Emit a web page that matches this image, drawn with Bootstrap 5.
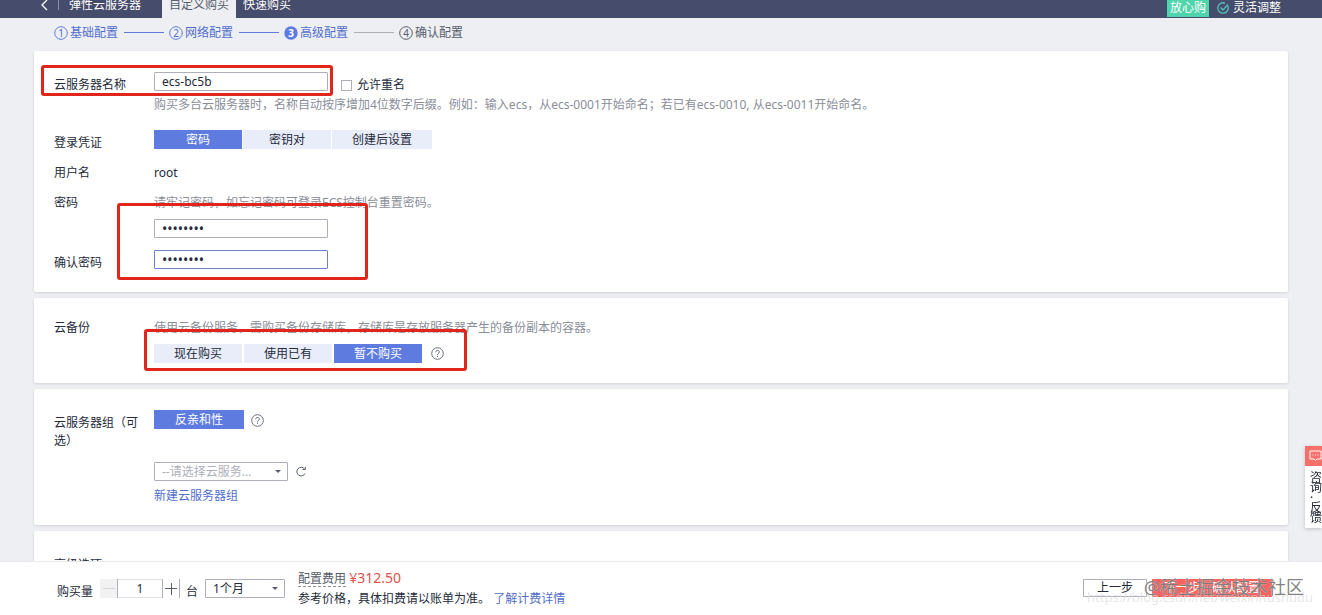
<!DOCTYPE html>
<html lang="zh-CN">
<head>
<meta charset="utf-8">
<meta name="viewport" content="width=device-width, initial-scale=1">
<title>弹性云服务器</title>
<link href="https://cdn.jsdelivr.net/npm/bootstrap@5.3.0/dist/css/bootstrap.min.css" rel="stylesheet">
<style>
body{font:12px/18px "Noto Sans","Noto Sans CJK SC",sans-serif;color:#252b3a;background:#edeff3;overflow:hidden;height:100vh}
a{color:#526ecc;text-decoration:none}
button,input,select{font:inherit;color:inherit}
.topbar{height:18px;background:#464c6b;color:#fff;overflow:hidden;padding-left:39px;padding-right:41px}
.topbar .item{line-height:26px;height:26px;color:#fff}
.topbar .extra{height:20px}
.topbar .current{background:#edeff3;color:#575d6c;padding:0 7px;margin-left:21px;margin-right:7px}
.topbar .rule{width:1px;height:10px;background:#8a8fa8;margin:0 10px 0 9px;align-self:flex-start}
.promo{background:#50d4ab;line-height:18px;height:18px;padding:0 3px}
.steps{height:33px;padding:0 0 4px 54px;color:#526ecc}
.steps .bar{width:40px;height:1px;background:#5e7ce0;margin:0 5px 0 6px}
.steps .todo{color:#575d6c}
.steps .bar.off{background:#adb0b8}
.steps svg{margin-right:2px}
.panel{position:relative;background:#fff;border-radius:2px;box-shadow:0 1px 3px rgba(0,0,0,.12);margin:0 34px 6px;padding:21px 20px 20px}
.line{display:flex;margin-bottom:12px}
.line:last-of-type{margin-bottom:0}
.line.wide{margin-bottom:16px}
.cap{flex:0 0 100px;padding-right:15px}
.low{padding-top:4px}
.hint{color:#8a8e99}
.hint.below{padding-top:2px}
.hint.above{margin-bottom:7px}
.box{display:block;height:19px;border:1px solid #adb0b8;border-radius:1px;background:#fff;padding:0 7px;line-height:17px;outline:0}
.field{width:174px}
.secret{font-size:14px}
.active-field{border-color:#6b82c8}
.dup{margin-left:13px}
.tick{appearance:none;width:11px;height:11px;border:1px solid #adb0b8;background:#fff;margin:0 5px 0 0}
.seg{height:19px;min-width:88px;border:0;background:#e9edfa;padding:0 20px;line-height:19px}
.seg.on{background:#5e7ce0;color:#fff}
.seg.solo{min-width:90px}
.seg-tight{gap:1px}
.seg-loose{gap:2px;padding-top:7px}
.ask{margin-left:7px}
.solo + .ask{margin-top:4px}
.group-row{margin-bottom:6px}
.pick{appearance:none;background:#fff url("data:image/svg+xml,%3Csvg xmlns='http://www.w3.org/2000/svg' viewBox='0 0 6 3'%3E%3Cpath d='M0 0h6L3 3z' fill='%23575d6c'/%3E%3C/svg%3E") no-repeat right 6px center/6px 3px;text-overflow:ellipsis;padding-right:28px}
.group-pick{width:134px;color:#adb0b8}
.month-pick{width:80px}
.mark-box{position:absolute;border:3px solid #e1251b;border-radius:3px;pointer-events:none}
.m-name{left:7px;top:14px;width:292px;height:31px}
.m-pass{left:83px;top:152px;width:251px;height:77px}
.m-backup{left:110px;top:31px;width:323px;height:42px}
.side{position:fixed;right:0;top:446px;width:17px;height:82px;background:#fff;overflow:hidden;box-shadow:0 1px 4px rgba(0,0,0,.2);color:#252b3a}
.side .top{display:block;height:20px;background:#f66f6a;padding-left:4px}
.side .say{display:block;width:12px;margin-left:5px;padding-top:7px;line-height:10px}
.buybar{position:fixed;left:0;right:0;bottom:0;height:54px;background:#fff;border-top:1px solid #e8e9ed;padding:6px 50px 0 57px}
.buybar .ctl{padding-top:11px}
.qty{margin-right:7px}
.unit{margin:0 7px 0 6px}
.stepper button{border:1px solid #adb0b8;border-width:0 1px;background:#fff;width:18px;height:19px;padding:0;line-height:0}
.stepper button:first-child{background:#f2f2f3;border-left:0}
.stepper input{width:44px;height:19px;border:1px solid #dfe1e6;border-width:1px 0;text-align:center;outline:0}
.cost{line-height:20px;margin-left:13px}
.price{font-size:14px;color:#e0504d}
.dash{border-bottom:1px dashed #8a8e99;color:#575d6c;line-height:14px;display:inline-block}
.prev{width:64px;border:1px solid #adb0b8;background:#fff;height:18px;line-height:16px;padding:0}
.next{width:120px;border:0;background:#f6625f;color:#fff;height:18px;line-height:18px;padding:0;margin-left:5px}
.wm{position:absolute;white-space:nowrap;pointer-events:none}
.wm-site{right:18px;top:13px;font-size:18px;line-height:24px;color:rgba(80,80,80,.72);text-shadow:0 0 1px #fff}
.wm-url{right:9px;top:25px;font-size:13px;line-height:20px;color:rgba(215,215,220,.65)}
</style>
</head>
<body>
<header class="topbar d-flex align-items-end">
  <a href="#" class="item d-flex align-items-center" aria-label="返回"><svg width="10" height="12" viewBox="0 0 10 12" fill="none" stroke="#fff" stroke-width="1.3"><path d="M8 1 3 6l5 5"/></svg></a>
  <span class="rule"></span>
  <span class="item">弹性云服务器</span>
  <a href="#" class="item current">自定义购买</a>
  <a href="#" class="item">快速购买</a>
  <div class="extra ms-auto d-flex align-items-center gap-2">
    <span class="promo">放心购</span>
    <span class="d-flex align-items-center"><svg class="me-1" width="12" height="12" viewBox="0 0 12 12" fill="none" stroke="#50c4bb" stroke-width="1.3"><path d="M10.8 4A5.2 5.2 0 1 1 8 1.2M3.5 5.5 6 8l5-5.5"/></svg>灵活调整</span>
  </div>
</header>

<nav class="steps d-flex align-items-center">
  <svg width="14" height="14" viewBox="0 0 14 14"><circle cx="7" cy="7" r="6.3" fill="none" stroke="#5e7ce0"/><text x="7" y="10.5" font-size="10" text-anchor="middle" fill="#526ecc">1</text></svg><span>基础配置</span><span class="bar"></span>
  <svg width="14" height="14" viewBox="0 0 14 14"><circle cx="7" cy="7" r="6.3" fill="none" stroke="#5e7ce0"/><text x="7" y="10.5" font-size="10" text-anchor="middle" fill="#526ecc">2</text></svg><span>网络配置</span><span class="bar"></span>
  <svg width="14" height="14" viewBox="0 0 14 14"><circle cx="7" cy="7" r="6.7" fill="#5e7ce0"/><text x="7" y="10.5" font-size="10" font-weight="700" text-anchor="middle" fill="#fff">3</text></svg><span>高级配置</span><span class="bar off"></span>
  <svg width="14" height="14" viewBox="0 0 14 14"><circle cx="7" cy="7" r="6.3" fill="none" stroke="#575d6c"/><text x="7" y="10.5" font-size="10" text-anchor="middle" fill="#575d6c">4</text></svg><span class="todo">确认配置</span>
</nav>

<main>
  <section class="panel">
    <div class="line wide">
      <label class="cap low" for="ecsName">云服务器名称</label>
      <div>
        <div class="d-flex">
          <input id="ecsName" class="box field" type="text" value="ecs-bc5b">
          <div class="dup low d-flex align-items-center">
            <input id="dup" class="tick" type="checkbox"><label for="dup">允许重名</label>
          </div>
        </div>
        <div class="hint below">购买多台云服务器时，名称自动按序增加4位数字后缀。例如：输入ecs，从ecs-0001开始命名；若已有ecs-0010, 从ecs-0011开始命名。</div>
      </div>
    </div>
    <div class="line">
      <span class="cap low">登录凭证</span>
      <div class="d-flex seg-tight">
        <button type="button" class="seg on">密码</button><button type="button" class="seg">密钥对</button><button type="button" class="seg">创建后设置</button>
      </div>
    </div>
    <div class="line"><span class="cap">用户名</span><span>root</span></div>
    <div class="line">
      <label class="cap" for="pw">密码</label>
      <div>
        <div class="hint above">请牢记密码，如忘记密码可登录ECS控制台重置密码。</div>
        <input id="pw" class="box field secret" type="password" value="abcd1234">
      </div>
    </div>
    <div class="line">
      <label class="cap low" for="pw2">确认密码</label>
      <input id="pw2" class="box field secret active-field" type="password" value="abcd1234">
    </div>
    <span class="mark-box m-name"></span>
    <span class="mark-box m-pass"></span>
  </section>

  <section class="panel">
    <div class="line">
      <span class="cap">云备份</span>
      <div>
        <div class="hint">使用云备份服务，需购买备份存储库，存储库是存放服务器产生的备份副本的容器。</div>
        <div class="d-flex align-items-center seg-loose">
          <button type="button" class="seg">现在购买</button><button type="button" class="seg">使用已有</button><button type="button" class="seg on">暂不购买</button>
          <svg class="ask" width="13" height="13" viewBox="0 0 13 13" fill="none" stroke="#6b707d"><circle cx="6.5" cy="6.5" r="5.8"/><path d="M4.7 5.2c0-2.4 3.6-2.4 3.6-.2 0 1.4-1.8 1.4-1.8 2.8M6.5 8.7v1.2"/></svg>
        </div>
      </div>
    </div>
    <span class="mark-box m-backup"></span>
  </section>

  <section class="panel">
    <div class="line">
      <span class="cap low">云服务器组（可选）</span>
      <div class="d-flex align-items-start">
        <button type="button" class="seg solo on">反亲和性</button>
        <svg class="ask" width="13" height="13" viewBox="0 0 13 13" fill="none" stroke="#6b707d"><circle cx="6.5" cy="6.5" r="5.8"/><path d="M4.7 5.2c0-2.4 3.6-2.4 3.6-.2 0 1.4-1.8 1.4-1.8 2.8M6.5 8.7v1.2"/></svg>
      </div>
    </div>
    <div class="line">
      <span class="cap"></span>
      <div>
        <div class="d-flex align-items-center group-row">
          <select class="box pick group-pick" aria-label="云服务器组"><option>--请选择云服务器组--</option></select>
          <svg class="ms-2" width="10" height="11" viewBox="0 0 10 11" fill="none" stroke="#575d6c"><path d="M9 7.600A4.300 4.300 0 1 1 8.600 3M9.300 .8v2.700H6.500"/></svg>
        </div>
        <a href="#">新建云服务器组</a>
      </div>
    </div>
  </section>

  <section class="panel">
    <div class="line"><span class="cap low">高级选项</span></div>
  </section>
</main>

<a href="#" class="side">
  <span class="top"><svg width="13" height="20" viewBox="0 0 13 20" fill="none" stroke="#fff"><path d="M1 5h11v8H8l-1.500 1.500L5 13H1zM3.500 9h1M6 9h1M8.500 9h1"/></svg></span>
  <span class="say">咨<br>询<br>·<br>反<br>馈</span>
</a>

<footer class="buybar">
  <div class="d-flex align-items-start">
    <div class="ctl d-flex">
      <label class="low qty" for="qty">购买量</label>
      <div class="stepper d-flex">
        <button type="button" aria-label="减少"><svg width="14" height="14" viewBox="0 0 14 14" stroke="#d3d5da"><path d="M1 6.500h12"/></svg></button><input id="qty" type="text" value="1"><button type="button" aria-label="增加"><svg width="14" height="14" viewBox="0 0 14 14" stroke="#575d6c"><path d="M1 6.500h12M7.500 1v12"/></svg></button>
      </div>
      <span class="low unit">台</span>
      <select class="box pick month-pick" aria-label="购买时长"><option>1个月</option></select>
    </div>
    <div class="cost">
      <div><span class="dash">配置费用</span> <span class="price">¥312.50</span></div>
      <div>参考价格，具体扣费请以账单为准。 <a href="#">了解计费详情</a></div>
    </div>
    <div class="ctl ms-auto d-flex">
      <button type="button" class="prev">上一步</button>
      <button type="button" class="next">下一步：确认配置</button>
    </div>
  </div>
  <span class="wm wm-url">https://blog.csdn.net/weixinhushudu</span>
  <span class="wm wm-site">@稀土掘金技术社区</span>
</footer>
<script src="https://cdn.jsdelivr.net/npm/bootstrap@5.3.0/dist/js/bootstrap.bundle.min.js"></script>
</body>
</html>
